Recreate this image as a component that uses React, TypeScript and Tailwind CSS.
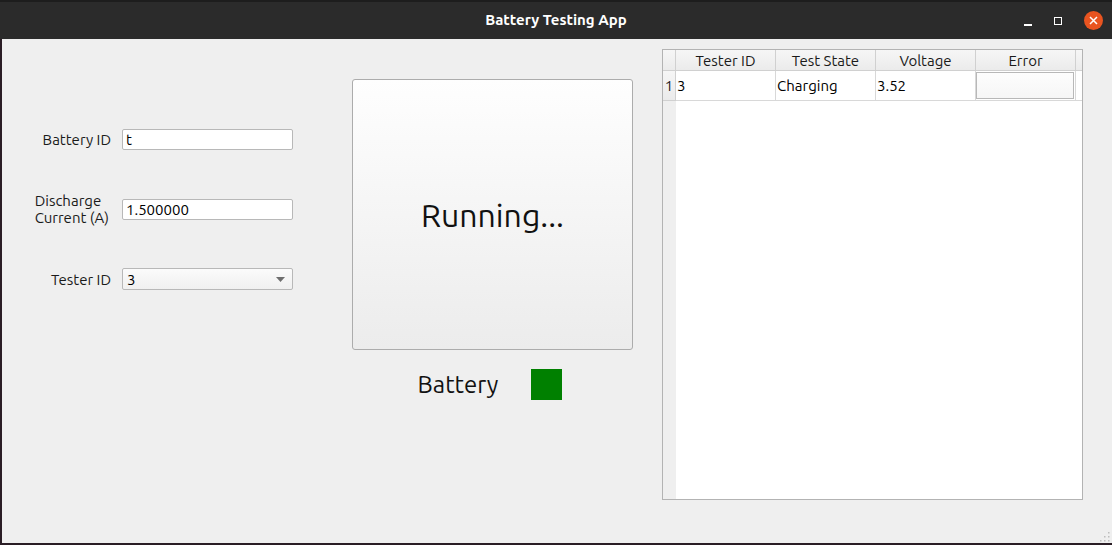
const font = "font-['Ubuntu','Open_Sans','Noto_Sans',sans-serif]";

function TitleBar() {
  return (
    <div className="relative h-[39px] shrink-0 bg-[#2b2b2b] border-t-2 border-[#1d1d1d] flex items-center justify-center">
      <span className="text-[15px] font-bold text-white">Battery Testing App</span>
      {/* window controls */}
      <div className="absolute right-[9px] top-[9px] flex items-center gap-[22px]">
        <div className="w-[8px] h-[10px] flex items-end">
          <div className="w-[8px] h-[1.5px] bg-white" />
        </div>
        <div className="w-[8px] h-[8px] border-[1.5px] border-white" />
        <div className="w-[19px] h-[19px] rounded-full bg-[#e95420] flex items-center justify-center">
          <svg width="9" height="9" viewBox="0 0 9 9">
            <path d="M1 1L8 8M8 1L1 8" stroke="white" strokeWidth="1.5" />
          </svg>
        </div>
      </div>
    </div>
  );
}

function Field({ label, children }: { label: React.ReactNode; children: React.ReactNode }) {
  return (
    <div className="flex items-center">
      <div className="w-[109px] text-right text-[15px] leading-[17px] text-[#1a1a1a]">{label}</div>
      <div className="ml-[11px]">{children}</div>
    </div>
  );
}

function TextInput({ value }: { value: string }) {
  return (
    <div className="w-[171px] h-[21px] bg-white border border-[#b8b8b8] rounded-[2px] px-[3px] text-[15px] leading-[19px] text-black">
      {value}
    </div>
  );
}

function Table() {
  const cols = ["Tester ID", "Test State", "Voltage", "Error"];
  return (
    <div className="w-[421px] h-[451px] border border-[#b3b3b3] bg-white flex flex-col">
      <div className="flex h-[21px] bg-gradient-to-b from-[#f6f6f6] to-[#ebebeb] border-b border-[#d0d0d0]">
        <div className="w-[13px] border-r border-[#d0d0d0]" />
        {cols.map((c) => (
          <div
            key={c}
            className="w-[100px] border-r border-[#d0d0d0] text-center text-[15px] leading-[21px] text-[#1a1a1a]"
          >
            {c}
          </div>
        ))}
      </div>
      <div className="flex flex-1">
        <div className="w-[13px] bg-[#efefef] flex flex-col">
          <div className="h-[30px] border-b border-r border-[#d0d0d0] bg-gradient-to-b from-[#f6f6f6] to-[#ebebeb] text-[15px] leading-[29px] text-center text-[#1a1a1a]">
            1
          </div>
        </div>
        <div className="flex-1">
          <div className="flex h-[30px] border-b border-[#d8d8d8] text-[15px] leading-[29px] text-black">
            <div className="w-[100px] border-r border-[#d8d8d8] pl-[1px]">3</div>
            <div className="w-[100px] border-r border-[#d8d8d8] pl-[1px]">Charging</div>
            <div className="w-[100px] border-r border-[#d8d8d8] pl-[1px]">3.52</div>
            <div className="w-[100px] border-r border-[#d8d8d8] py-[1px] pr-[1px]">
              <div className="h-[27px] border border-[#b8b8b8] bg-gradient-to-b from-[#fdfdfd] to-[#f6f6f6]" />
            </div>
          </div>
        </div>
      </div>
    </div>
  );
}

export default function App() {
  return (
    <div className={`w-[1112px] h-[545px] flex flex-col bg-[#2a1d25] ${font}`}>
      <TitleBar />
      <div className="relative flex-1 ml-[2px] mb-[2px] bg-[#efefef] flex items-start">
        {/* form */}
        <div className="w-[350px] pt-[90px] flex flex-col">
          <Field label="Battery ID">
            <TextInput value="t" />
          </Field>
          <div className="mt-[42px]">
            <Field
              label={
                <span className="inline-block text-left pr-[2px]">
                  Discharge
                  <br />
                  Current (A)
                </span>
              }
            >
              <TextInput value="1.500000" />
            </Field>
          </div>
          <div className="mt-[42px]">
            <Field label="Tester ID">
              <div className="w-[171px] h-[22px] border border-[#b8b8b8] rounded-[2px] bg-gradient-to-b from-[#fbfbfb] to-[#f0f0f0] flex items-center justify-between pl-[4px] pr-[7px] text-[15px] text-black">
                <span className="leading-[20px] pt-[1px]">3</span>
                <svg width="9" height="5" viewBox="0 0 9 5">
                  <path d="M0 0H9L4.5 5Z" fill="#6e6e6e" />
                </svg>
              </div>
            </Field>
          </div>
        </div>

        {/* center */}
        <div className="w-[281px] pt-[40px] flex flex-col">
          <button className="h-[271px] w-[281px] border border-[#acacac] rounded-[3px] bg-gradient-to-b from-[#fefefe] to-[#ececec] text-[32px] text-[#111]">
            Running...
          </button>
          <div className="mt-[19px] flex items-center justify-center gap-[33px] pr-[5px]">
            <span className="text-[24px] leading-[31px] text-[#111]">Battery</span>
            <div className="w-[31px] h-[31px] bg-[#008000]" />
          </div>
        </div>

        {/* table */}
        <div className="ml-[29px] pt-[10px]">
          <Table />
        </div>

        {/* resize grip */}
        <svg className="absolute right-[2px] bottom-[1px]" width="11" height="11" viewBox="0 0 11 11">
          {[
            [9, 1],
            [9, 5],
            [5, 5],
            [9, 9],
            [5, 9],
            [1, 9],
          ].map(([x, y]) => (
            <rect key={`${x}-${y}`} x={x} y={y} width="1.5" height="1.5" fill="#bdbdbd" />
          ))}
        </svg>
      </div>
    </div>
  );
}
